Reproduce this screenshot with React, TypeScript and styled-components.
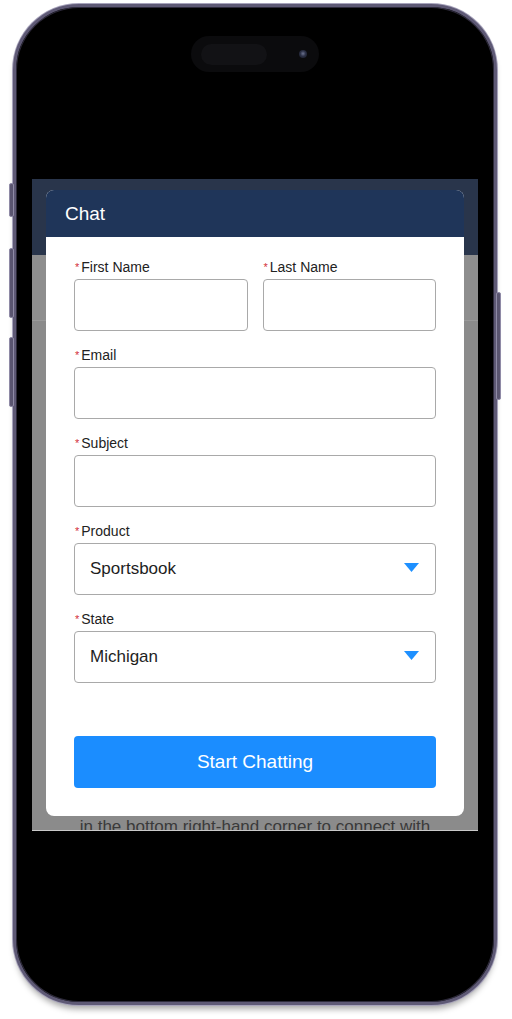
import React from 'react';
import styled, { createGlobalStyle } from 'styled-components';

const GlobalStyle = createGlobalStyle`
  html, body {
    margin: 0;
    padding: 0;
    background: #ffffff;
  }
  body {
    font-family: "Liberation Sans", Arial, sans-serif;
  }
`;

const Stage = styled.div`
  width: 512px;
  height: 1019px;
  padding: 4px 0 0 13px;
  box-sizing: border-box;
  overflow: hidden;
`;

const Phone = styled.div`
  position: relative;
  width: 484px;
  height: 1001px;
  box-sizing: border-box;
  border-radius: 66px;
  background: #000;
  border: 3px solid #5e5975;
  box-shadow: inset 0 0 0 1px #2d2a3a, 0 0 0 1px #a7a3bb, 0 6px 6px -2px rgba(0, 0, 0, 0.35);
  padding: 29px 16px 0;
  display: flex;
  flex-direction: column;
  align-items: center;
`;

const SideButton = styled.span<{ $side: 'left' | 'right'; $top: number; $h: number }>`
  position: absolute;
  ${(p) => (p.$side === 'left' ? 'left: -7px;' : 'right: -7px;')}
  top: ${(p) => p.$top}px;
  width: 3px;
  height: ${(p) => p.$h}px;
  border-radius: 2px;
  background: #5a5570;
  border: 1px solid #8f8aa6;
`;

const Island = styled.div`
  width: 128px;
  height: 36px;
  border-radius: 18px;
  background: #0b0b0d;
  display: flex;
  align-items: center;
  justify-content: space-between;
  padding: 0 12px 0 10px;
  box-sizing: border-box;
`;

const IslandPill = styled.div`
  width: 66px;
  height: 21px;
  border-radius: 11px;
  background: #121215;
`;

const Camera = styled.div`
  width: 8px;
  height: 8px;
  border-radius: 50%;
  background: radial-gradient(circle at 50% 45%, #6c7390 0, #2c3146 45%, #141622 100%);
`;

const WebView = styled.div`
  position: relative;
  margin-top: 107px;
  width: 446px;
  height: 651px;
  background: #8b8b8b;
  overflow: hidden;
  border-bottom: 1px solid #c9c9c9;
  display: flex;
  flex-direction: column;
`;

const PageHeader = styled.div`
  height: 76px;
  flex-shrink: 0;
  background: #29354b;
`;

const PageBand = styled.div`
  height: 65px;
  flex-shrink: 0;
  background: #8e8e8e;
  border-bottom: 1px solid #9a9a9a;
`;

const PageBody = styled.div`
  padding: 494px 20px 0;
  font-size: 17px;
  color: #3a3a3a;
  text-align: center;
  line-height: 24px;
`;

const Modal = styled.div`
  position: absolute;
  left: 14px;
  top: 11px;
  width: 418px;
  height: 626px;
  background: #fff;
  border-radius: 8px;
  overflow: hidden;
  display: flex;
  flex-direction: column;
`;

const ModalHeader = styled.div`
  height: 47px;
  background: #1f3559;
  color: #fff;
  font-size: 19px;
  display: flex;
  align-items: center;
  padding: 0 19px;
  flex-shrink: 0;
`;

const Form = styled.div`
  padding: 21px 28px 28px;
  display: flex;
  flex-direction: column;
  gap: 15px;
  flex: 1;
`;

const Row = styled.div`
  display: grid;
  grid-template-columns: 1fr 1fr;
  gap: 15px;
`;

const Field = styled.div`
  display: flex;
  flex-direction: column;
  gap: 3px;
`;

const Label = styled.div`
  height: 18px;
  font-size: 14px;
  line-height: 16px;
  color: #222;
  display: flex;
  align-items: center;
`;

const Required = styled.span`
  color: #d32f3c;
  font-size: 11px;
  margin: 0 2px 0 1px;
`;

const Input = styled.div`
  height: 52px;
  box-sizing: border-box;
  border: 1.5px solid #a9a9a9;
  border-radius: 4px;
  background: #fff;
`;

const Select = styled(Input)`
  display: flex;
  align-items: center;
  justify-content: space-between;
  padding: 0 16px 0 15px;
  font-size: 17px;
  color: #1e1e1e;
`;

const Caret = styled.svg`
  width: 15px;
  height: 9px;
  margin-top: -4px;
`;

const StartButton = styled.div`
  margin-top: auto;
  height: 52px;
  border-radius: 4px;
  background: #1b8dff;
  color: #fff;
  font-size: 19px;
  display: flex;
  align-items: center;
  justify-content: center;
`;

const TextField = ({ label }: { label: string }) => (
  <Field>
    <Label>
      <Required>*</Required>
      {label}
    </Label>
    <Input />
  </Field>
);

const SelectField = ({ label, value }: { label: string; value: string }) => (
  <Field>
    <Label>
      <Required>*</Required>
      {label}
    </Label>
    <Select>
      {value}
      <Caret viewBox="0 0 15 9">
        <path d="M0 0h15L7.5 9z" fill="#1e90ff" />
      </Caret>
    </Select>
  </Field>
);

export default function App() {
  return (
    <>
      <GlobalStyle />
      <Stage>
        <Phone>
          <SideButton $side="left" $top={176} $h={32} />
          <SideButton $side="left" $top={241} $h={68} />
          <SideButton $side="left" $top={330} $h={68} />
          <SideButton $side="right" $top={285} $h={106} />
          <Island>
            <IslandPill />
            <Camera />
          </Island>
          <WebView>
            <PageHeader />
            <PageBand />
            <PageBody>in the bottom right-hand corner to connect with</PageBody>
            <Modal>
              <ModalHeader>Chat</ModalHeader>
              <Form>
                <Row>
                  <TextField label="First Name" />
                  <TextField label="Last Name" />
                </Row>
                <TextField label="Email" />
                <TextField label="Subject" />
                <SelectField label="Product" value="Sportsbook" />
                <SelectField label="State" value="Michigan" />
                <StartButton>Start Chatting</StartButton>
              </Form>
            </Modal>
          </WebView>
        </Phone>
      </Stage>
    </>
  );
}
